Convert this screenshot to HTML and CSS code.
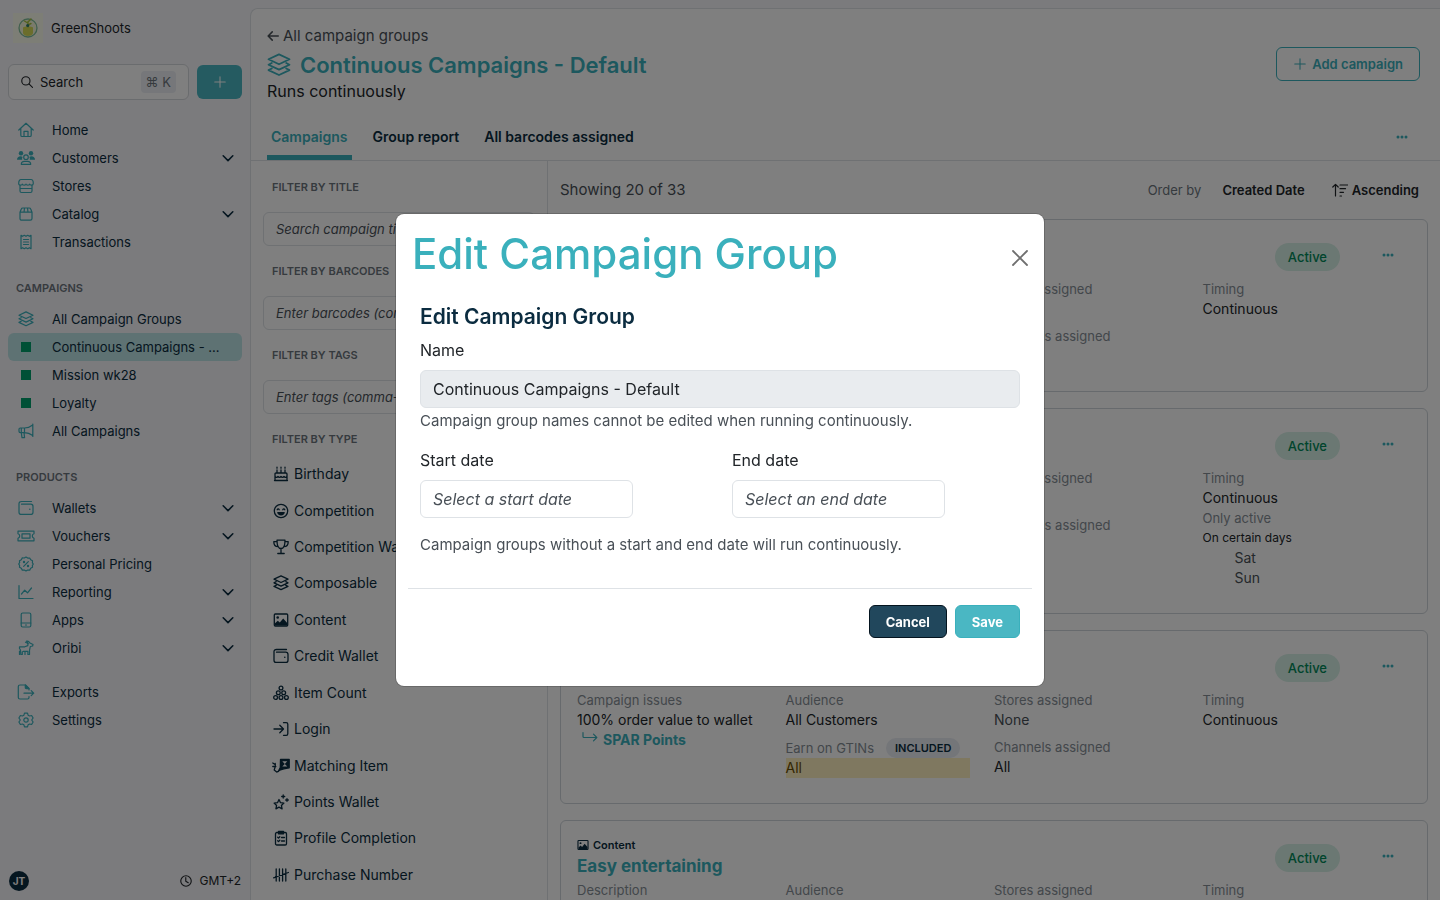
FILE: index.html
```html
<!DOCTYPE html>
<html lang="en">
<head>
  <meta charset="UTF-8" />
  <meta name="viewport" content="width=device-width, initial-scale=1.0" />
  <title>Continuous Campaigns - Default</title>
  <link rel="stylesheet" href="styles.css">
</head>
<body>
  <!-- icon sprite -->
  <svg class="sprite" aria-hidden="true">
    <symbol id="i-search" viewBox="0 0 16 16"><circle cx="6.5" cy="6.5" r="5.500"/><path d="M10.600 10.600l4.700 4.700"/></symbol>
    <symbol id="i-plus" viewBox="0 0 16 16"><path d="M8 2v12M2 8h12"/></symbol>
    <symbol id="i-chevron" viewBox="0 0 16 16"><path d="M2.500 5.500l5.500 5.500 5.500-5.500"/></symbol>
    <symbol id="i-home" viewBox="0 0 16 16"><path d="M.8 8L8 1.3 15.2 8M2.8 6.5v6.7c0 .8.5 1.3 1.3 1.3h7.8c.8 0 1.3-.5 1.3-1.3V6.500M6 14.300V9.300h4v5"/></symbol>
    <symbol id="i-people" viewBox="0 0 18 16"><g fill="currentColor" stroke="none"><circle cx="4" cy="3.300" r="2.200"/><circle cx="14" cy="3.300" r="2.200"/><path d="M0 9.800C0 7.500 1.500 6.300 3.500 6.300c1 0 1.600.2 2.200.600-.7 1-.8 2-.3 2.900zM18 9.800c0-2.300-1.500-3.500-3.500-3.500-1 0-1.600.2-2.200.600.700 1 .8 2 .3 2.900z"/></g><circle cx="9" cy="7.200" r="2.300"/><path d="M4.300 14.300c0-2 1.500-3 3.200-3h3c1.700 0 3.200 1 3.200 3z"/></symbol>
    <symbol id="i-shop" viewBox="0 0 16 16"><path d="M3 1.500h10c1.500 0 2.300 2 2.300 4 0 1-.8 1.600-1.800 1.600S11.700 6.500 11.700 6c0 .6-.8 1.100-1.800 1.100S8 6.500 8 6c0 .6-.9 1.100-1.900 1.100S4.300 6.500 4.300 6c0 .6-.8 1.100-1.800 1.100S.7 6.500.7 5.500c0-2 .8-4 2.300-4zM2 7.200V13c0 1 .5 1.500 1.500 1.500h9c1 0 1.500-.5 1.500-1.500V7.200M2 10.500h12"/></symbol>
    <symbol id="i-box" viewBox="0 0 16 16"><path d="M2 6.200L3.300 3c.3-.8.800-1 1.500-1h6.400c.7 0 1.200.2 1.500 1L14 6.200v6.300c0 1-.7 1.700-1.700 1.700H3.700c-1 0-1.700-.7-1.700-1.700zM2 6.200h12M6 6.200L6.500 2M10 6.200L9.500 2"/></symbol>
    <symbol id="i-receipt" viewBox="0 0 16 16"><path d="M3 1.300l1.600 1 1.700-1 1.700 1 1.700-1 1.700 1 1.600-1v13.400l-1.600-1-1.700 1-1.700-1-1.700 1-1.700-1-1.600 1zM5.500 5.500h5M5.500 8h5M5.500 10.500h5"/></symbol>
    <symbol id="i-stack" viewBox="0 0 16 16"><path d="M8 .9l7 3.300-7 3.300-7-3.300zM3.200 6.700L1 7.800l7 3.300 7-3.300-2.200-1.100M3.200 10.300L1 11.400l7 3.300 7-3.300-2.200-1.100"/></symbol>
    <symbol id="i-megaphone" viewBox="0 0 16 16"><path d="M14.800 1v12.400M14.300 2.300C12 4.200 9.500 5 6.500 5H2.300C1.300 5 1 5.500 1 6.300v2c0 .9.300 1.300 1.300 1.300h4.200c3 0 5.500.8 7.800 2.700M6.500 5v4.600M3.300 5v4.600l.7 5h2.600L6 9.700"/></symbol>
    <symbol id="i-wallet" viewBox="0 0 16 16"><path d="M13.500 1.500h-10C2 1.500 1 2.300 1 3.600v8.600c0 1.400.8 2.200 2.200 2.200h9.600c1.400 0 2.200-.8 2.200-2.200V6.400c0-1.400-.8-2.200-2.200-2.200H3.500"/><circle cx="11.800" cy="9.300" r=".8" fill="currentColor" stroke="none"/></symbol>
    <symbol id="i-ticket" viewBox="0 0 18 16"><path d="M1 3.200h16v2.600c-1.200.4-1.700 1.100-1.700 2.200s.5 1.800 1.700 2.200v2.600H1v-2.600C2.200 9.800 2.700 9.100 2.700 8S2.200 6.200 1 5.800zM5 5.800h8v4.400H5z"/></symbol>
    <symbol id="i-percent" viewBox="0 0 16 16"><path d="M8 1l1.700 1.100 2-.1 1 1.800 1.800 1-.1 2L15.300 8l-.9 1.300.1 2-1.800 1-1 1.800-2-.1L8 15l-1.700-1-2 .1-1-1.800-1.800-1 .1-2L.7 8l.9-1.300-.1-2 1.800-1 1-1.800 2 .1zM5.700 10.300l4.600-4.600"/><circle cx="6" cy="6" r=".6"/><circle cx="10" cy="10" r=".6"/></symbol>
    <symbol id="i-graph" viewBox="0 0 16 16"><path d="M1 1.500v13h14M3.500 10l3.200-3.800 2.800 2.600L13.500 4"/></symbol>
    <symbol id="i-phone" viewBox="0 0 16 16"><rect x="3.200" y="1" width="9.600" height="14" rx="1.500"/><path d="M3.200 11h9.600M7.500 13h1"/></symbol>
    <symbol id="i-oribi" viewBox="0 0 16 16"><path d="M8.500 1.200c1.500-.3 2.600.3 3 1.600l3.500 1.700-.4 1.500-2.300.5-.8 4v4h-1.600v-3.200H5.500L4.300 12v2.500H2.800L2.500 10 1.500 8.500V6.800h5.300l3-1.200.2-2.100z"/><path d="M10 3.500L7.500 2.200M1.500 11v3.500M7 14.500V12"/></symbol>
    <symbol id="i-export" viewBox="0 0 17 16"><path d="M11.500 6V4.500L8 1H2.500C1.500 1 .8 1.600.8 2.500v11c0 .9.700 1.500 1.700 1.500h7.500c1 0 1.500-.6 1.500-1.500v-1M6.500 9.200h9.700M13.700 6.700l2.500 2.500-2.500 2.500"/><path d="M7.800 1v2.500c0 .8.400 1.200 1.200 1.200h2.500z" fill="currentColor"/></symbol>
    <symbol id="i-gear" viewBox="0 0 16 16"><path d="M6.500 1.200h3l.6 2 1.500.8 2-.5 1.500 2.500L13.700 8l1.400 2-1.500 2.500-2-.5-1.500.8-.6 2h-3l-.6-2-1.500-.8-2 .5L.9 10l1.400-2L.9 6l1.500-2.500 2 .5 1.500-.8z"/><circle cx="8" cy="8" r="2.200"/></symbol>
    <symbol id="i-clock" viewBox="0 0 16 16"><circle cx="8" cy="8" r="7"/><path d="M7.700 3.500V8.300l3.300 2"/></symbol>
    <symbol id="i-back" viewBox="0 0 16 16"><path d="M15 8H2M7 2.500L1.500 8 7 13.500"/></symbol>
    <symbol id="i-sort" viewBox="0 0 16 16"><path d="M3.500 14V2.500M.8 5l2.700-2.700L6.200 5M8 3h7.500M8 6.700h5.500M8 10.300h3.500M8 14h1.500"/></symbol>
    <symbol id="i-dots" viewBox="0 0 16 16"><g fill="currentColor" stroke="none"><circle cx="4" cy="8" r="1.500"/><circle cx="8" cy="8" r="1.500"/><circle cx="12" cy="8" r="1.500"/></g></symbol>
    <symbol id="i-return" viewBox="0 0 16 16"><path d="M1 2.500v4c0 .7.400 1 1 1h12.500M11.500 4.200l3.300 3.300-3.300 3.300"/></symbol>
    <symbol id="i-cake" viewBox="0 0 16 16"><path d="M4 4v3M8 4v3M12 4v3M4 1.200v1M8 1.200v1M12 1.200v1M2 14.500V8c0-.6.400-1 1-1h10c.6 0 1 .4 1 1v6.500M1.500 14.500h13M2 10.500c1 1.200 2 1.200 3 0 1 1.200 2 1.200 3 0 1 1.200 2 1.200 3 0 1 1.200 2 1.200 3 0"/></symbol>
    <symbol id="i-smile" viewBox="0 0 16 16"><circle cx="8" cy="8" r="6.700"/><path d="M4.200 6.700c.5-1 1.500-1 2 0M9.800 6.700c.5-1 1.500-1 2 0"/><path d="M4.200 9h7.600c0 2.200-1.700 3.600-3.800 3.600S4.200 11.200 4.200 9z" fill="currentColor" stroke="none"/></symbol>
    <symbol id="i-trophy" viewBox="0 0 16 16"><path d="M4 1.200h8c0 4.800-1.200 8.300-4 8.300S4 6 4 1.200zM4 2.700H.8c0 3.300 1.700 5 4.200 5M12 2.700h3.200c0 3.300-1.700 5-4.200 5M8 9.500v4.700M4.800 14.500h6.400"/></symbol>
    <symbol id="i-image" viewBox="0 0 16 16"><rect x="1.300" y="2" width="13.400" height="12" rx="1"/><g fill="currentColor" stroke="none"><circle cx="4.700" cy="5.500" r="1.300"/><path d="M2 13.500v-2.200l2.800-2.500 2 1.800 3.400-4.200 3.800 4.400v2.700z"/></g></symbol>
    <symbol id="i-items" viewBox="0 0 16 16"><circle cx="8" cy="3" r="1.900"/><circle cx="5.300" cy="7.700" r="1.900"/><circle cx="10.700" cy="7.700" r="1.900"/><circle cx="2.600" cy="12.500" r="1.900"/><circle cx="8" cy="12.500" r="1.900"/><circle cx="13.400" cy="12.500" r="1.900"/></symbol>
    <symbol id="i-login" viewBox="0 0 16 16"><path d="M10.500 1.700h2.700c1 0 1.600.6 1.600 1.600v9.400c0 1-.6 1.600-1.600 1.600h-2.700M1 8h9.500M6.800 4.200L10.500 8l-3.700 3.800"/></symbol>
    <symbol id="i-match" viewBox="0 0 18 16"><path d="M8.500 1.500h8.700v8.300l-5.400 1-5 1.700 1.500-3z" fill="currentColor"/><path d="M10.300 3.200h5L12.800 6zM10.300 8.600h5L12.800 6z" fill="#fff" stroke="none"/><path d="M.8 5l2.200 1.500M.8 8.500h3M3.200 5.500c.5 3-.5 5-1 6.500l2.500 2c1.500 0 2.500-1 3.300-2.500"/></symbol>
    <symbol id="i-stars" viewBox="0 0 16 16"><path d="M6 5.500l1.500 3.200 3.400.4-2.500 2.300.7 3.400L6 13.200l-3.100 1.600.7-3.400L1.100 9.100l3.400-.4zM10.200 1v3M8.700 2.500h3M14 4.700v2.600M12.700 6h2.600"/></symbol>
    <symbol id="i-clipboard" viewBox="0 0 16 16"><rect x="2.500" y="2.500" width="11" height="12.500" rx="1.300"/><path d="M5.500 1.500h5v2.300h-5z" fill="currentColor"/><path d="M8.500 7.500h3M8.500 11h3M4.700 7.300l.8.800 1.300-1.400M4.700 10.800l.8.800 1.300-1.400"/></symbol>
    <symbol id="i-tally" viewBox="0 0 16 16"><path d="M3.200 2v12M6.400 2v12M9.600 2v12M12.800 2v12M.6 10.800L15.400 5.500"/></symbol>
    <symbol id="i-close" viewBox="0 0 16 16"><path d="M1 1l14 14M15 1L1 15"/></symbol>
    <symbol id="i-logo" viewBox="0 0 30 30"><rect width="30" height="30" fill="#fbfcec" stroke="none"/><circle cx="15" cy="15" r="9" fill="#f5f7d8" stroke="#7fbf9b" stroke-width="1.300"/><path d="M10 14.500c1.500-1.300 8.500-1.300 10 0v5.500c0 1.500-2 3-5 3s-5-1.500-5-3z" fill="#d6db57" stroke="none"/><path d="M15 14V8.500M14.700 10L11.500 8M15 9l3-3M15 12l3-1.500" stroke="#a9c43f" stroke-width="1.400"/><circle cx="14.700" cy="12.500" r="1.600" fill="#2d7f6c" stroke="none"/></symbol>
  </svg>

  <div class="app">
    <aside class="sidebar">
      <div class="brand">
        <svg class="icon brand-logo"><use href="#i-logo"/></svg>
        <span>GreenShoots</span>
      </div>
      <div class="quick">
        <button class="search" type="button">
          <svg class="icon icon-12"><use href="#i-search"/></svg>
          <span>Search</span>
          <kbd>⌘ K</kbd>
        </button>
        <button class="create" type="button" aria-label="Create"><svg class="icon"><use href="#i-plus"/></svg></button>
      </div>

      <nav class="nav">
        <a href="#"><svg class="icon"><use href="#i-home"/></svg><span>Home</span></a>
        <a href="#"><svg class="icon icon-wide"><use href="#i-people"/></svg><span>Customers</span><svg class="icon chevron"><use href="#i-chevron"/></svg></a>
        <a href="#"><svg class="icon"><use href="#i-shop"/></svg><span>Stores</span></a>
        <a href="#"><svg class="icon"><use href="#i-box"/></svg><span>Catalog</span><svg class="icon chevron"><use href="#i-chevron"/></svg></a>
        <a href="#"><svg class="icon"><use href="#i-receipt"/></svg><span>Transactions</span></a>
      </nav>

      <h2 class="nav-title">CAMPAIGNS</h2>
      <nav class="nav">
        <a href="#"><svg class="icon"><use href="#i-stack"/></svg><span>All Campaign Groups</span></a>
        <a href="#" class="active"><i class="square"></i><span>Continuous Campaigns - ...</span></a>
        <a href="#"><i class="square"></i><span>Mission wk28</span></a>
        <a href="#"><i class="square"></i><span>Loyalty</span></a>
        <a href="#"><svg class="icon"><use href="#i-megaphone"/></svg><span>All Campaigns</span></a>
      </nav>

      <h2 class="nav-title">PRODUCTS</h2>
      <nav class="nav">
        <a href="#"><svg class="icon"><use href="#i-wallet"/></svg><span>Wallets</span><svg class="icon chevron"><use href="#i-chevron"/></svg></a>
        <a href="#"><svg class="icon icon-wide"><use href="#i-ticket"/></svg><span>Vouchers</span><svg class="icon chevron"><use href="#i-chevron"/></svg></a>
        <a href="#"><svg class="icon"><use href="#i-percent"/></svg><span>Personal Pricing</span></a>
        <a href="#"><svg class="icon"><use href="#i-graph"/></svg><span>Reporting</span><svg class="icon chevron"><use href="#i-chevron"/></svg></a>
        <a href="#"><svg class="icon"><use href="#i-phone"/></svg><span>Apps</span><svg class="icon chevron"><use href="#i-chevron"/></svg></a>
        <a href="#"><svg class="icon"><use href="#i-oribi"/></svg><span>Oribi</span><svg class="icon chevron"><use href="#i-chevron"/></svg></a>
      </nav>

      <nav class="nav nav-extra">
        <a href="#"><svg class="icon icon-wide"><use href="#i-export"/></svg><span>Exports</span></a>
        <a href="#"><svg class="icon"><use href="#i-gear"/></svg><span>Settings</span></a>
      </nav>

      <div class="sidebar-footer">
        <span class="avatar">JT</span>
        <span class="timezone"><svg class="icon icon-12"><use href="#i-clock"/></svg>GMT+2</span>
      </div>
    </aside>

    <main class="main">
      <header class="page-header">
        <div>
          <a class="back" href="#"><svg class="icon icon-12"><use href="#i-back"/></svg>All campaign groups</a>
          <h1><svg class="icon"><use href="#i-stack"/></svg>Continuous Campaigns - Default</h1>
          <p>Runs continuously</p>
        </div>
        <button class="btn btn-outline" type="button"><svg class="icon"><use href="#i-plus"/></svg>Add campaign</button>
      </header>

      <div class="tabs">
        <a href="#" class="active">Campaigns</a>
        <a href="#">Group report</a>
        <a href="#">All barcodes assigned</a>
        <button class="dots" type="button" aria-label="More"><svg class="icon"><use href="#i-dots"/></svg></button>
      </div>

      <div class="content">
        <section class="filters">
          <label for="f-title">FILTER BY TITLE</label>
          <input id="f-title" type="text" placeholder="Search campaign titles" />
          <label for="f-barcodes">FILTER BY BARCODES</label>
          <input id="f-barcodes" type="text" placeholder="Enter barcodes (comma-separated)" />
          <label for="f-tags">FILTER BY TAGS</label>
          <input id="f-tags" type="text" placeholder="Enter tags (comma-separated)" />
          <h3>FILTER BY TYPE</h3>
          <ul class="types">
            <li><a href="#"><svg class="icon"><use href="#i-cake"/></svg>Birthday</a></li>
            <li><a href="#"><svg class="icon"><use href="#i-smile"/></svg>Competition</a></li>
            <li><a href="#"><svg class="icon"><use href="#i-trophy"/></svg>Competition Wallet</a></li>
            <li><a href="#"><svg class="icon"><use href="#i-stack"/></svg>Composable</a></li>
            <li><a href="#"><svg class="icon"><use href="#i-image"/></svg>Content</a></li>
            <li><a href="#"><svg class="icon"><use href="#i-wallet"/></svg>Credit Wallet</a></li>
            <li><a href="#"><svg class="icon"><use href="#i-items"/></svg>Item Count</a></li>
            <li><a href="#"><svg class="icon"><use href="#i-login"/></svg>Login</a></li>
            <li><a href="#"><svg class="icon icon-wide"><use href="#i-match"/></svg>Matching Item</a></li>
            <li><a href="#"><svg class="icon"><use href="#i-stars"/></svg>Points Wallet</a></li>
            <li><a href="#"><svg class="icon"><use href="#i-clipboard"/></svg>Profile Completion</a></li>
            <li><a href="#"><svg class="icon"><use href="#i-tally"/></svg>Purchase Number</a></li>
          </ul>
        </section>

        <section class="results">
          <div class="toolbar">
            <span class="count">Showing 20 of 33</span>
            <span class="order">Order by</span>
            <button class="sort" type="button">Created Date</button>
            <button class="sort" type="button"><svg class="icon"><use href="#i-sort"/></svg>Ascending</button>
          </div>

          <article class="card">
            <div class="card-head">
              <div class="card-title"></div>
              <span class="badge">Active</span>
              <button class="dots" type="button" aria-label="More"><svg class="icon"><use href="#i-dots"/></svg></button>
            </div>
            <div class="card-grid">
              <dl></dl>
              <dl></dl>
              <dl><dt>Stores assigned</dt><dd class="muted">None</dd><dt>Channels assigned</dt><dd>All</dd></dl>
              <dl><dt>Timing</dt><dd>Continuous</dd></dl>
            </div>
          </article>

          <article class="card">
            <div class="card-head">
              <div class="card-title"></div>
              <span class="badge">Active</span>
              <button class="dots" type="button" aria-label="More"><svg class="icon"><use href="#i-dots"/></svg></button>
            </div>
            <div class="card-grid">
              <dl></dl>
              <dl></dl>
              <dl><dt>Stores assigned</dt><dd class="muted">None</dd><dt>Channels assigned</dt><dd>All</dd></dl>
              <dl>
                <dt>Timing</dt>
                <dd>Continuous</dd>
                <dd class="note">Only active</dd>
                <dd class="small">On certain days</dd>
                <dd class="day">Sat</dd>
                <dd class="day">Sun</dd>
              </dl>
            </div>
          </article>

          <article class="card">
            <div class="card-head">
              <div class="card-title"></div>
              <span class="badge">Active</span>
              <button class="dots" type="button" aria-label="More"><svg class="icon"><use href="#i-dots"/></svg></button>
            </div>
            <div class="card-grid">
              <dl>
                <dt>Campaign issues</dt>
                <dd>100% order value to wallet</dd>
                <dd><a class="wallet-link" href="#"><svg class="icon"><use href="#i-return"/></svg>SPAR Points</a></dd>
              </dl>
              <dl>
                <dt>Audience</dt>
                <dd>All Customers</dd>
                <dt class="with-pill">Earn on GTINs <span class="pill">INCLUDED</span></dt>
                <dd class="highlight">All</dd>
              </dl>
              <dl><dt>Stores assigned</dt><dd class="muted">None</dd><dt>Channels assigned</dt><dd>All</dd></dl>
              <dl><dt>Timing</dt><dd>Continuous</dd></dl>
            </div>
          </article>

          <article class="card">
            <div class="card-head">
              <div class="card-title">
                <span class="type"><svg class="icon icon-12"><use href="#i-image"/></svg>Content</span>
                <a href="#">Easy entertaining</a>
              </div>
              <span class="badge">Active</span>
              <button class="dots" type="button" aria-label="More"><svg class="icon"><use href="#i-dots"/></svg></button>
            </div>
            <div class="card-grid">
              <dl><dt>Description</dt></dl>
              <dl><dt>Audience</dt></dl>
              <dl><dt>Stores assigned</dt></dl>
              <dl><dt>Timing</dt></dl>
            </div>
          </article>
        </section>
      </div>
    </main>
  </div>

  <div class="backdrop">
    <div class="modal" role="dialog" aria-modal="true" aria-labelledby="modal-title">
      <div class="modal-header">
        <h2 id="modal-title">Edit Campaign Group</h2>
        <button class="close" type="button" aria-label="Close"><svg class="icon"><use href="#i-close"/></svg></button>
      </div>
      <form class="modal-body">
        <h3>Edit Campaign Group</h3>
        <label for="name">Name</label>
        <input id="name" type="text" value="Continuous Campaigns - Default" disabled />
        <p class="help">Campaign group names cannot be edited when running continuously.</p>
        <div class="dates">
          <div>
            <label for="start">Start date</label>
            <input id="start" type="text" placeholder="Select a start date" />
          </div>
          <div>
            <label for="end">End date</label>
            <input id="end" type="text" placeholder="Select an end date" />
          </div>
        </div>
        <p class="help">Campaign groups without a start and end date will run continuously.</p>
        <div class="modal-actions">
          <button class="btn btn-dark" type="button">Cancel</button>
          <button class="btn btn-primary" type="submit">Save</button>
        </div>
      </form>
    </div>
  </div>
</body>
</html>
```

FILE: styles.css
```css
:root {
  --teal: #3ab0bc;
  --teal-light: #4ab7c3;
  --navy: #0b2c40;
  --text: #212529;
  --grey: #6c757d;
  --border: #dee2e6;
}
* {
  box-sizing: border-box;
}
body {
  margin: 0;
  font-family: Inter, "Liberation Sans", sans-serif;
  font-size: 14px;
  line-height: 20px;
  color: var(--text);
  background: #f6f6fa;
}
h1, h2, h3, p, ul, dl, dd {
  margin: 0;
  padding: 0;
}
a {
  color: inherit;
  text-decoration: none;
}
button, input {
  font: inherit;
  color: inherit;
}
button {
  cursor: pointer;
}
.sprite {
  display: none;
}
.icon {
  width: 16px;
  height: 16px;
  flex: none;
  fill: none;
  stroke: currentColor;
  stroke-width: 1.2;
  stroke-linecap: round;
  stroke-linejoin: round;
}
.icon-12 {
  width: 12px;
  height: 12px;
  stroke-width: 1.5;
}
.icon-wide {
  width: 18px;
  margin: 0 -1px;
}

.app {
  display: flex;
  height: 100vh;
  overflow: hidden;
}

/* sidebar */
.sidebar {
  width: 250px;
  flex: none;
  display: flex;
  flex-direction: column;
  padding: 12px 8px 9px;
  font-size: 13px;
}
.brand {
  display: flex;
  align-items: center;
  gap: 8px;
  height: 32px;
  padding-left: 5px;
}
.brand-logo {
  width: 30px;
  height: 30px;
}
.quick {
  display: flex;
  align-items: center;
  gap: 8px;
  margin: 20px 0 16px;
}
.search {
  flex: 1;
  display: flex;
  align-items: center;
  gap: 7px;
  height: 36px;
  padding: 0 12px;
  border: 1px solid #d5d8dc;
  border-radius: 6px;
  background: #fff;
}
.search kbd {
  margin-left: auto;
  padding: 1px 5px;
  border-radius: 4px;
  background: #eceff4;
  color: var(--grey);
  font: inherit;
}
.create {
  width: 45px;
  height: 34px;
  display: flex;
  align-items: center;
  justify-content: center;
  border: 0;
  border-radius: 6px;
  background: var(--teal-light);
  color: #fff;
}
.create .icon {
  width: 14px;
  height: 14px;
}
.nav a {
  display: flex;
  align-items: center;
  height: 28px;
  padding: 0 7px 0 10px;
  border-radius: 6px;
  color: var(--navy);
}
.nav a.active {
  background: #bce4e6;
}
.nav a > .icon:first-child {
  color: var(--teal);
}
.nav a > span {
  flex: 1;
  min-width: 0;
  margin: 0 8px 0 18px;
  overflow: hidden;
  white-space: nowrap;
  text-overflow: ellipsis;
}
.nav .chevron {
  width: 14px;
  height: 14px;
  stroke-width: 1.8;
}
.square {
  width: 10px;
  height: 10px;
  margin: 0 3px;
  background: #00a06c;
}
.nav-title {
  margin: 22px 0 7px 8px;
  font-size: 11px;
  line-height: 20px;
  font-weight: 600;
  color: var(--grey);
}
.nav-extra {
  margin-top: 16px;
}
.sidebar-footer {
  display: flex;
  align-items: center;
  justify-content: space-between;
  margin-top: auto;
  padding: 0 1px;
  font-size: 12px;
}
.avatar {
  width: 20px;
  height: 20px;
  border-radius: 50%;
  background: var(--navy);
  color: #fff;
  font-size: 10px;
  font-weight: 700;
  text-align: center;
}
.timezone {
  display: flex;
  align-items: center;
  gap: 7px;
}

/* main area */
.main {
  flex: 1;
  min-width: 0;
  display: flex;
  flex-direction: column;
  margin-top: 8px;
  border: solid var(--border);
  border-width: 1px 0 0 1px;
  border-radius: 8px 0 0 0;
  background: #fff;
}
.page-header {
  display: flex;
  align-items: center;
  justify-content: space-between;
  padding: 17px 20px 0 16px;
}
.back {
  display: flex;
  align-items: center;
  gap: 4px;
  font-size: 15px;
  color: #495057;
}
.back .icon {
  stroke-width: 2;
}
.page-header h1 {
  display: flex;
  align-items: center;
  gap: 9px;
  font-size: 22px;
  line-height: 38px;
  font-weight: 600;
  color: var(--teal);
}
.page-header h1 .icon {
  width: 24px;
  height: 24px;
}
.page-header p {
  margin-top: -5px;
  font-size: 16px;
  line-height: 24px;
}
.btn {
  display: flex;
  align-items: center;
  justify-content: center;
  gap: 5px;
  height: 33px;
  padding: 0 16px;
  border: 1px solid transparent;
  border-radius: 6px;
  font-size: 13px;
  font-weight: 700;
}
.btn-outline {
  height: 34px;
  margin-bottom: 2px;
  background: #fff;
  border-color: var(--teal);
  color: var(--teal);
  font-weight: 600;
}
.btn .icon {
  width: 14px;
  height: 14px;
}
.btn-primary {
  background: var(--teal-light);
  border-color: var(--teal);
  color: #fff;
}
.btn-dark {
  background: #21475c;
  border-color: #04141f;
  color: #fff;
}
.tabs {
  display: flex;
  gap: 17px;
  height: 58px;
  padding: 0 15px 0 16px;
  border-bottom: 1px solid var(--border);
}
.tabs a {
  padding: 24px 4px 0;
  font-weight: 600;
  color: var(--navy);
}
.tabs a.active {
  color: var(--teal);
  border-bottom: 5px solid var(--teal);
}
.tabs .dots {
  margin: 14px 0 0 auto;
}
.dots {
  width: 46px;
  height: 44px;
  padding: 0;
  border: 0;
  background: none;
  color: var(--teal);
}
.content {
  flex: 1;
  min-height: 0;
  display: flex;
}

/* filters */
.filters {
  width: 297px;
  flex: none;
  display: flex;
  flex-direction: column;
  padding: 16px 12px 7px;
  border-right: 1px solid var(--border);
}
.filters label, .filters h3 {
  padding-left: 9px;
  font-size: 11px;
  line-height: 20px;
  font-weight: 600;
  color: var(--grey);
}
.filters input {
  width: 100%;
  height: 34px;
  flex: none;
  margin: 15px 0;
  padding: 0 12px;
  border: 1px solid var(--border);
  border-radius: 6px;
  background: #fff;
  font-size: 13px;
}
input::placeholder {
  color: #495057;
  font-style: italic;
  opacity: 1;
}
.types {
  flex: 1;
  display: flex;
  flex-direction: column;
  margin-top: 7px;
  list-style: none;
}
.types li {
  flex: 1;
  display: flex;
  align-items: center;
}
.types a {
  display: flex;
  align-items: center;
  gap: 5px;
  padding-left: 10px;
  color: var(--navy);
}
.types .icon {
  stroke-width: 1.3;
}

/* campaign list */
.results {
  flex: 1;
  min-width: 0;
  padding: 0 12px;
}
.toolbar {
  display: flex;
  align-items: center;
  height: 58px;
  padding-right: 9px;
}
.count {
  margin-right: auto;
  font-size: 15px;
  color: #495057;
}
.order {
  margin-right: 21px;
  font-size: 13px;
  color: var(--grey);
}
.sort {
  display: flex;
  align-items: center;
  gap: 4px;
  padding: 0;
  border: 0;
  background: none;
  font-size: 13px;
  font-weight: 600;
}
.sort + .sort {
  margin-left: 27px;
}
.card {
  margin-bottom: 16px;
  padding: 15px 16px 25px;
  border: 1px solid #ced4da;
  border-radius: 6px;
}
.card-head {
  display: flex;
  align-items: center;
  height: 44px;
}
.card-title {
  flex: 1;
}
.card-title .type {
  display: flex;
  align-items: center;
  gap: 4px;
  font-size: 11px;
  line-height: 16px;
  font-weight: 600;
  color: var(--navy);
}
.card-title a {
  font-size: 17px;
  line-height: 26px;
  font-weight: 700;
  color: var(--teal);
}
.badge {
  margin-right: 25px;
  padding: 4px 13px;
  border-radius: 14px;
  background: #d6f0e6;
  color: #008a5a;
  font-size: 13px;
  font-weight: 500;
}
.card-grid {
  display: grid;
  grid-template-columns: repeat(4, 1fr);
}
.card-grid dt {
  font-size: 13px;
  color: #868e96;
}
.card-grid dd + dt {
  margin-top: 7px;
}
.card-grid .muted, .card-grid .day {
  color: #495057;
}
.card-grid .note {
  font-size: 13px;
  color: #868e96;
}
.card-grid .small {
  font-size: 12px;
}
.card-grid .day {
  padding-left: 32px;
}
.card-grid .with-pill {
  display: flex;
  align-items: center;
  gap: 12px;
  height: 21px;
}
.pill {
  padding: 0 9px;
  border-radius: 10px;
  background: #e9ecf2;
  color: var(--navy);
  font-size: 11px;
  font-weight: 600;
}
.highlight {
  margin-right: 24px;
  background: #fff0c0;
  color: #664d03;
}
.wallet-link {
  display: flex;
  gap: 5px;
  padding-left: 5px;
  color: var(--teal);
  font-weight: 700;
}

/* modal */
.backdrop {
  position: fixed;
  inset: 0;
  display: flex;
  align-items: center;
  justify-content: center;
  background: rgba(0, 0, 0, 0.5);
}
.modal {
  width: 648px;
  border-radius: 8px;
  background: #fff;
  box-shadow: 0 0 0 1px rgba(0, 0, 0, 0.175);
}
.modal-header {
  display: flex;
  align-items: center;
  justify-content: space-between;
  padding: 16px 16px 8px;
}
.modal-header h2 {
  font-size: 42px;
  line-height: 48px;
  font-weight: 500;
  color: var(--teal);
}
.close {
  width: 16px;
  height: 16px;
  padding: 0;
  margin-top: 8px;
  border: 0;
  background: none;
  color: #6f6f6f;
}
.close .icon {
  display: block;
  stroke-width: 1.8;
}
.modal-body {
  padding: 19px 24px 48px;
}
.modal-body h3 {
  font-size: 21px;
  line-height: 24px;
  font-weight: 600;
  color: var(--navy);
}
.modal-body label {
  display: block;
  margin: 9px 0 8px;
  font-size: 16px;
  line-height: 24px;
}
.modal-body input {
  display: block;
  width: 100%;
  height: 38px;
  padding: 0 12px;
  border: 1px solid var(--border);
  border-radius: 6px;
  background: #fff;
  font-size: 16px;
}
.modal-body input:disabled {
  background: #e9ecef;
  color: var(--text);
}
.help {
  margin-top: 3px;
  font-size: 15px;
  color: #495057;
}
.dates {
  display: grid;
  grid-template-columns: 1fr 1fr;
  gap: 24px;
  margin: 8px 0 17px;
}
.modal-body .dates input {
  width: 213px;
}
.modal-actions {
  display: flex;
  justify-content: flex-end;
  gap: 8px;
  margin: 33px -12px 0;
  padding: 16px 12px 0;
  border-top: 1px solid var(--border);
}
```
